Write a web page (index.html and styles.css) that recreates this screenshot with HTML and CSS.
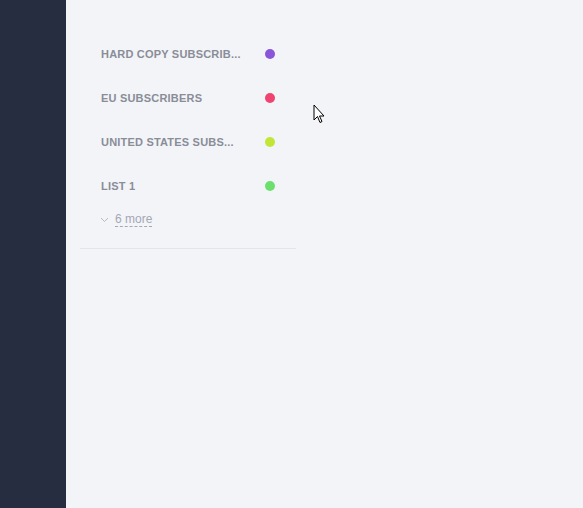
FILE: index.html
```html
<!DOCTYPE html>
<html lang="en">
<head>
  <meta charset="UTF-8">
  <title>Lists</title>
  <link rel="stylesheet" href="styles.css">
</head>
<body>
  <div class="sidebar"></div>
  <div class="main">
    <div class="lists">
      <ul class="list-items">
        <li class="list-item">
          <span class="list-name">Hard copy subscrib...</span>
          <span class="dot dot-purple"></span>
        </li>
        <li class="list-item">
          <span class="list-name">EU subscribers</span>
          <span class="dot dot-red"></span>
        </li>
        <li class="list-item">
          <span class="list-name">United States subs...</span>
          <span class="dot dot-lime"></span>
        </li>
        <li class="list-item">
          <span class="list-name">List 1</span>
          <span class="dot dot-green"></span>
        </li>
      </ul>
      <div class="more">
        <svg class="chevron" width="9" height="6" viewBox="0 0 9 6">
          <path d="M1 1l3.5 3.5L8 1" fill="none" stroke="#b5bac6" stroke-width="1"/>
        </svg>
        <span class="more-link">6 more</span>
      </div>
    </div>
  </div>
  <svg class="cursor" width="14" height="21" viewBox="0 0 14 21">
    <path d="M1 1v15l3.5-3.5 2.5 6 2-1-2.5-5.5H11z" fill="#fff" stroke="#000" stroke-width="1" stroke-linejoin="round"/>
  </svg>
</body>
</html>
```

FILE: styles.css
```css
html, body {
  margin: 0;
  height: 100%;
}
body {
  display: flex;
  font-family: 'Liberation Sans', Arial, sans-serif;
  background: #f3f4f8;
}
.sidebar {
  width: 66px;
  flex-shrink: 0;
  background: #272d40;
}
.main {
  flex: 1;
  padding: 32px 0 0 14px;
}
.lists {
  width: 216px;
  border-bottom: 1px solid #e3e5ec;
  padding-bottom: 21px;
}
.list-items {
  list-style: none;
  margin: 0;
  padding: 0;
}
.list-item {
  display: flex;
  align-items: center;
  justify-content: space-between;
  height: 44px;
  padding: 0 21px;
}
.list-name {
  white-space: nowrap;
  text-transform: uppercase;
  font-size: 11px;
  font-weight: 700;
  letter-spacing: 0.2px;
  color: #898d97;
}
.dot {
  width: 10px;
  height: 10px;
  border-radius: 50%;
}
.dot-purple { background: #8a55d8; }
.dot-red { background: #ef4470; }
.dot-lime { background: #c2e638; }
.dot-green { background: #6be06d; }
.more {
  display: flex;
  align-items: center;
  gap: 6px;
  padding: 0 20px;
  margin-top: 4px;
}
.more-link {
  font-size: 12px;
  color: #a3a8b5;
  border-bottom: 1px dashed #a3a8b5;
  line-height: 14px;
}
.cursor {
  position: absolute;
  left: 313px;
  top: 104px;
}
```
